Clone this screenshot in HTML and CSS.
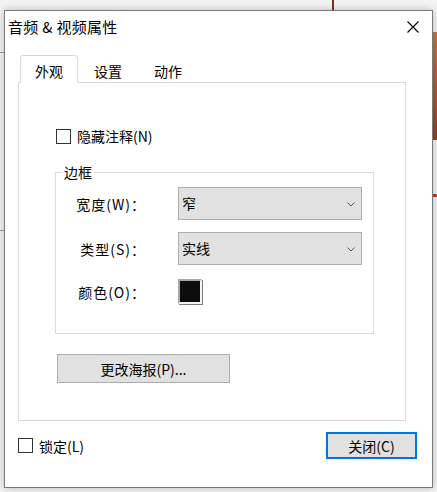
FILE: index.html
```html
<!DOCTYPE html>
<html lang="zh-CN">
<head>
<meta charset="utf-8">
<title>音频 &amp; 视频属性</title>
<link rel="stylesheet" href="styles.css">
</head>
<body>
<div class="backdrop">
  <div class="dialog">
    <div class="titlebar">
      <span class="title">音频 &amp; 视频属性</span>
      <span class="close"><svg width="12" height="12" viewBox="0 0 12 12"><path d="M0.5 0.5L11.5 11.5M11.5 0.5L0.5 11.5" stroke="#000" stroke-width="1.1" fill="none"/></svg></span>
    </div>
    <div class="content">
      <div class="tabs">
        <div class="tab active">外观</div>
        <div class="tab">设置</div>
        <div class="tab">动作</div>
      </div>
      <div class="panel">
        <div class="check hide-notes"><span class="box"></span><span>隐藏注释(N)</span></div>
        <div class="group">
          <div class="legend">边框</div>
          <div class="rows">
            <div class="lbl">宽度(W)：</div>
            <div class="select"><span>窄</span><svg width="8" height="5" viewBox="0 0 8 5"><path d="M0.5 0.5L4 4L7.5 0.5" stroke="#555" fill="none"/></svg></div>
            <div class="lbl">类型(S)：</div>
            <div class="select"><span>实线</span><svg width="8" height="5" viewBox="0 0 8 5"><path d="M0.5 0.5L4 4L7.5 0.5" stroke="#555" fill="none"/></svg></div>
            <div class="lbl color-lbl">颜色(O)：</div>
            <div class="swatch"></div>
          </div>
        </div>
        <div class="btn poster">更改海报(P)...</div>
      </div>
      <div class="footer">
        <div class="check"><span class="box"></span><span>锁定(L)</span></div>
        <div class="btn close-btn">关闭(C)</div>
      </div>
    </div>
  </div>
</div>
</body>
</html>
```

FILE: styles.css
```css
* { box-sizing: border-box; }
html, body { margin: 0; padding: 0; }
body {
  width: 437px;
  height: 492px;
  overflow: hidden;
  font-family: "Noto Sans CJK SC", "Noto Sans", sans-serif;
  font-size: 14px;
  color: #000;
  background:
    linear-gradient(#8b2b1f, #8b2b1f) 332px 0 / 2px 10px no-repeat,
    linear-gradient(#c9773a, #9c3f22) 433px 32px / 4px 108px no-repeat,
    linear-gradient(#c23a2a, #c23a2a) 433px 194px / 4px 3px no-repeat,
    linear-gradient(#9a9a9a, #9a9a9a) 0 52px / 4px 1px no-repeat,
    linear-gradient(#9a9a9a, #9a9a9a) 0 230px / 4px 1px no-repeat,
    #f4f4f4;
}
.backdrop { padding: 10px 0 0 4px; }
.dialog {
  width: 429px;
  height: 478px;
  border: 1px solid #7a7a7a;
  background: #fff;
  box-shadow: 0 0 8px rgba(0, 0, 0, 0.25);
}
.titlebar {
  height: 32px;
  display: flex;
  align-items: center;
  justify-content: space-between;
  padding-left: 3px;
}
.title { font-size: 15px; line-height: 20px; letter-spacing: 0.3px; }
.close {
  width: 38px;
  height: 32px;
  display: flex;
  align-items: center;
  justify-content: center;
}
.content { padding: 12px 0 0 13px; }
.tabs { display: flex; height: 27px; padding-left: 2px; }
.tab {
  width: 60px;
  text-align: center;
  line-height: 20px;
  padding-top: 6px;
}
.tab.active {
  width: 58px;
  height: 28px;
  border: 1px solid #d9d9d9;
  border-bottom: none;
  border-radius: 3px 3px 0 0;
  background: #fff;
  position: relative;
  z-index: 1;
  padding-top: 5px;
}
.panel {
  width: 388px;
  height: 339px;
  border: 1px solid #d9d9d9;
  padding: 43px 0 0 36px;
}
.check {
  display: flex;
  align-items: center;
  height: 20px;
  gap: 6px;
  line-height: 20px;
}
.hide-notes { margin-left: 1px; }
.box {
  width: 15px;
  height: 15px;
  border: 1px solid #333;
  background: #fff;
}
.group {
  margin-top: 26px;
  width: 319px;
  height: 162px;
  border: 1px solid #dcdcdc;
}
.legend {
  display: table;
  margin: -11px 0 0 6px;
  padding: 0 2px;
  background: #fff;
  line-height: 20px;
}
.rows {
  margin-top: 5px;
  display: grid;
  grid-template-columns: 90px 184px;
  column-gap: 32px;
  row-gap: 12px;
  align-items: center;
}
.lbl { text-align: right; line-height: 20px; letter-spacing: 1px; }
.color-lbl { margin-top: 2px; }
.select {
  height: 33px;
  background: #e1e1e1;
  border: 1px solid #adadad;
  display: flex;
  align-items: center;
  justify-content: space-between;
  padding: 0 6px 1px 3px;
  line-height: 20px;
}
.select svg { margin-top: 2px; }
.swatch {
  margin-top: 2px;
  width: 24px;
  height: 25px;
  background: #0d0d0d;
  border: 2px solid;
  border-color: #a8a8a8 #f4f4f4 #f4f4f4 #a8a8a8;
  box-shadow: 1px 1px 0 #7c7c7c;
}
.btn {
  background: #e1e1e1;
  border: 1px solid #adadad;
  display: flex;
  align-items: center;
  justify-content: center;
  line-height: 20px;
}
.poster {
  margin: 20px 0 0 2px;
  width: 173px;
  height: 29px;
}
.footer {
  margin-top: 11px;
  width: 399px;
  height: 27px;
  display: flex;
  align-items: center;
  justify-content: space-between;
}
.close-btn {
  width: 91px;
  height: 27px;
  border: 2px solid #0078d7;
}
```
